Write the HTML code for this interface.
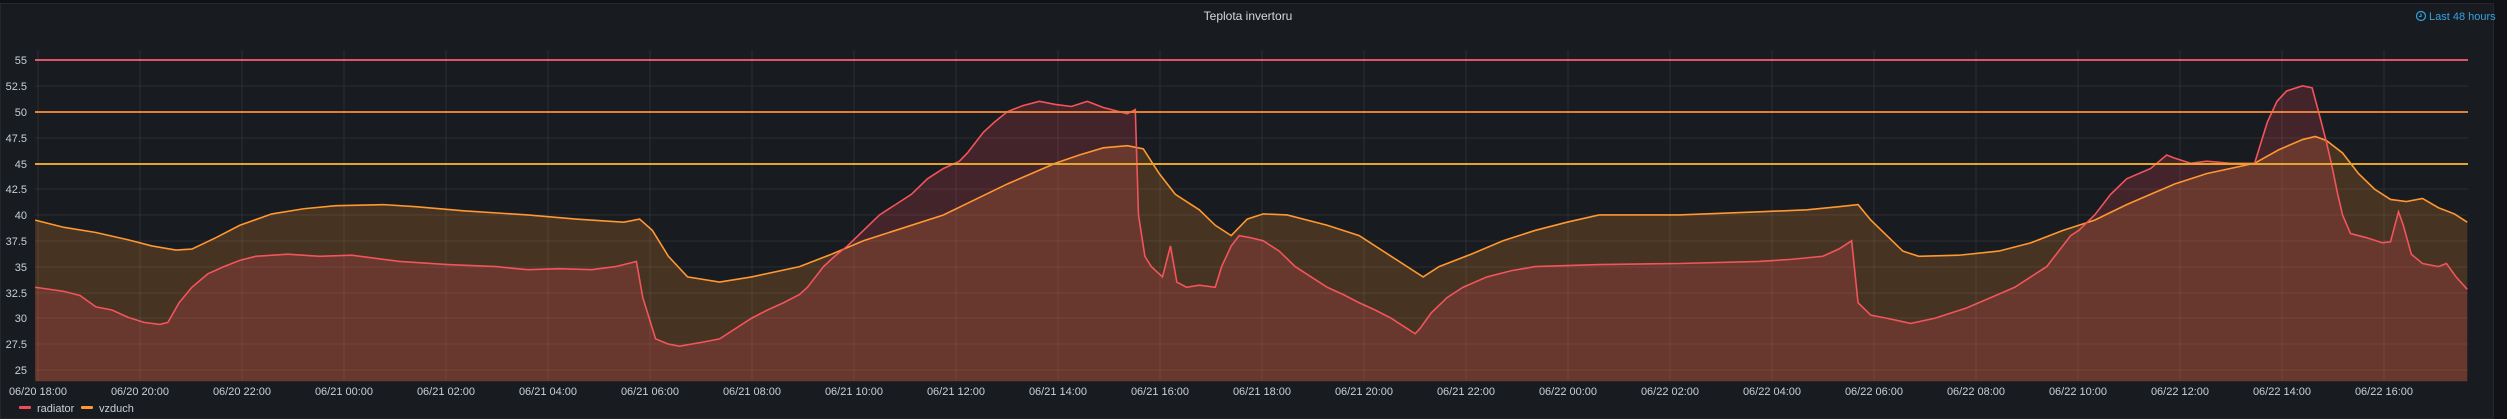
<!DOCTYPE html>
<html><head><meta charset="utf-8"><style>
html,body{margin:0;padding:0;background:#111217;width:2507px;height:419px;overflow:hidden;font-family:"Liberation Sans",sans-serif}
.panel{position:absolute;left:0;top:3px;width:2494px;height:416px;background:#181b1f;border:1px solid #25272c;box-sizing:border-box}
</style></head><body>
<div class="panel"></div>
<svg width="2507" height="419" style="position:absolute;left:0;top:0" font-family="Liberation Sans, sans-serif">
<text x="1248" y="20" fill="#d8d9da" font-size="12" text-anchor="middle">Teplota invertoru</text>
<circle cx="2421" cy="16" r="4.5" fill="none" stroke="#33a2e5" stroke-width="1.2"/>
<path d="M2421 13.5V16.5H2419" fill="none" stroke="#33a2e5" stroke-width="1.1"/>
<text x="2429" y="20" fill="#33a2e5" font-size="11">Last 48 hours</text>
<g stroke="#2b2d32" stroke-width="1">
<line x1="35" y1="86" x2="2468" y2="86"/><line x1="35" y1="138" x2="2468" y2="138"/>
<line x1="35" y1="189" x2="2468" y2="189"/><line x1="35" y1="215" x2="2468" y2="215"/>
<line x1="35" y1="241" x2="2468" y2="241"/><line x1="35" y1="267" x2="2468" y2="267"/>
<line x1="35" y1="293" x2="2468" y2="293"/><line x1="35" y1="318" x2="2468" y2="318"/>
<line x1="35" y1="344" x2="2468" y2="344"/><line x1="35" y1="370" x2="2468" y2="370"/>
</g>
<g transform="matrix(1.599 0 0 -10.33 0 628.15)">
<path fill="rgba(255,152,48,0.2)" d="M22 39.5 L40 38.8 60 38.3 80 37.6 95 37 110 36.6 120 36.7 135 37.8 150 39 170 40.1 190 40.6 210 40.9 240 41 260 40.8 290 40.4 330 40 360 39.6 390 39.3 400 39.6 408 38.5 418 36 430 34 450 33.5 470 34 500 35 520 36.2 540 37.5 560 38.5 590 40 610 41.5 630 43 645 44 660 45 675 45.8 690 46.5 705 46.7 715 46.4 725 44 735 42 750 40.5 760 39 770 38 780 39.6 790 40.1 805 40 830 39 850 38 870 36 890 34 900 35 920 36.2 940 37.5 960 38.5 980 39.3 1000 40 1050 40 1100 40.3 1130 40.5 1150 40.8 1162 41 1170 39.5 1180 38 1190 36.5 1200 36 1225 36.1 1250 36.5 1270 37.3 1290 38.5 1310 39.5 1330 41 1345 42 1360 43 1380 44 1410 45 1425 46.3 1440 47.3 1448 47.6 1455 47.2 1465 46 1475 44 1485 42.5 1495 41.5 1505 41.3 1515 41.6 1525 40.7 1535 40.1 1543 39.3 L1543 23.9 L22 23.9Z"/>
<path fill="rgba(242,73,92,0.2)" d="M22 33 L40 32.6 50 32.2 60 31.1 70 30.8 80 30.1 90 29.6 100 29.4 105 29.6 112 31.5 120 33 130 34.3 140 35 150 35.6 160 36 180 36.2 200 36 220 36.1 250 35.5 280 35.2 310 35 330 34.7 350 34.8 370 34.7 385 35 398 35.5 402 32 410 28 418 27.5 425 27.3 440 27.7 450 28 460 29 470 30 480 30.8 490 31.5 500 32.3 505 33 510 34 515 35 522 36 530 37 540 38.5 550 40 560 41 570 42 580 43.5 590 44.5 600 45.2 605 46 610 47 615 48 622 49 630 50 640 50.6 650 51 660 50.7 670 50.5 680 51 690 50.4 700 50 705 49.8 710 50.2 712 40 716 36 720 35 727 34 732 37 736 33.5 742 33 750 33.2 760 33 764 35 770 37 775 38 782 37.8 790 37.5 800 36.5 810 35 820 34 830 33 840 32.3 850 31.5 860 30.8 870 30 880 29 885 28.5 888 29 895 30.5 905 32 915 33 930 34 945 34.6 960 35 980 35.1 1000 35.2 1050 35.3 1100 35.5 1120 35.7 1140 36 1150 36.7 1158 37.5 1162 31.5 1170 30.3 1180 30 1195 29.5 1210 30 1230 31 1245 32 1260 33 1270 34 1280 35 1290 37 1295 38 1300 38.5 1310 40 1320 42 1330 43.5 1345 44.5 1355 45.8 1360 45.5 1370 45 1380 45.2 1395 45 1410 45 1414 47 1418 49 1424 51 1430 52 1440 52.5 1446 52.3 1450 50 1455 47 1458 45 1462 42 1465 40 1470 38.2 1480 37.8 1490 37.3 1495 37.4 1500 40.3 1503 39 1508 36.2 1515 35.3 1525 35 1530 35.3 1536 34 1543 32.8 L1543 23.9 L22 23.9Z"/>
<path fill="none" stroke="#ff9830" stroke-width="1.6" vector-effect="non-scaling-stroke" d="M22 39.5 L40 38.8 60 38.3 80 37.6 95 37 110 36.6 120 36.7 135 37.8 150 39 170 40.1 190 40.6 210 40.9 240 41 260 40.8 290 40.4 330 40 360 39.6 390 39.3 400 39.6 408 38.5 418 36 430 34 450 33.5 470 34 500 35 520 36.2 540 37.5 560 38.5 590 40 610 41.5 630 43 645 44 660 45 675 45.8 690 46.5 705 46.7 715 46.4 725 44 735 42 750 40.5 760 39 770 38 780 39.6 790 40.1 805 40 830 39 850 38 870 36 890 34 900 35 920 36.2 940 37.5 960 38.5 980 39.3 1000 40 1050 40 1100 40.3 1130 40.5 1150 40.8 1162 41 1170 39.5 1180 38 1190 36.5 1200 36 1225 36.1 1250 36.5 1270 37.3 1290 38.5 1310 39.5 1330 41 1345 42 1360 43 1380 44 1410 45 1425 46.3 1440 47.3 1448 47.6 1455 47.2 1465 46 1475 44 1485 42.5 1495 41.5 1505 41.3 1515 41.6 1525 40.7 1535 40.1 1543 39.3"/>
<path fill="none" stroke="#f2545c" stroke-width="1.6" vector-effect="non-scaling-stroke" d="M22 33 L40 32.6 50 32.2 60 31.1 70 30.8 80 30.1 90 29.6 100 29.4 105 29.6 112 31.5 120 33 130 34.3 140 35 150 35.6 160 36 180 36.2 200 36 220 36.1 250 35.5 280 35.2 310 35 330 34.7 350 34.8 370 34.7 385 35 398 35.5 402 32 410 28 418 27.5 425 27.3 440 27.7 450 28 460 29 470 30 480 30.8 490 31.5 500 32.3 505 33 510 34 515 35 522 36 530 37 540 38.5 550 40 560 41 570 42 580 43.5 590 44.5 600 45.2 605 46 610 47 615 48 622 49 630 50 640 50.6 650 51 660 50.7 670 50.5 680 51 690 50.4 700 50 705 49.8 710 50.2 712 40 716 36 720 35 727 34 732 37 736 33.5 742 33 750 33.2 760 33 764 35 770 37 775 38 782 37.8 790 37.5 800 36.5 810 35 820 34 830 33 840 32.3 850 31.5 860 30.8 870 30 880 29 885 28.5 888 29 895 30.5 905 32 915 33 930 34 945 34.6 960 35 980 35.1 1000 35.2 1050 35.3 1100 35.5 1120 35.7 1140 36 1150 36.7 1158 37.5 1162 31.5 1170 30.3 1180 30 1195 29.5 1210 30 1230 31 1245 32 1260 33 1270 34 1280 35 1290 37 1295 38 1300 38.5 1310 40 1320 42 1330 43.5 1345 44.5 1355 45.8 1360 45.5 1370 45 1380 45.2 1395 45 1410 45 1414 47 1418 49 1424 51 1430 52 1440 52.5 1446 52.3 1450 50 1455 47 1458 45 1462 42 1465 40 1470 38.2 1480 37.8 1490 37.3 1495 37.4 1500 40.3 1503 39 1508 36.2 1515 35.3 1525 35 1530 35.3 1536 34 1543 32.8"/>
</g>
<line x1="35" y1="60" x2="2468" y2="60" stroke="#e0546a" stroke-width="2"/>
<line x1="35" y1="112" x2="2468" y2="112" stroke="#e57d3a" stroke-width="2"/>
<line x1="35" y1="164" x2="2468" y2="164" stroke="#e5a32a" stroke-width="2"/>
<g fill="#c7d0d9" font-size="11" text-anchor="end">
<text x="27" y="64">55</text><text x="27" y="90">52.5</text><text x="27" y="116">50</text><text x="27" y="142">47.5</text>
<text x="27" y="168">45</text><text x="27" y="193">42.5</text><text x="27" y="219">40</text><text x="27" y="245">37.5</text>
<text x="27" y="271">35</text><text x="27" y="297">32.5</text><text x="27" y="322">30</text><text x="27" y="348">27.5</text><text x="27" y="374">25</text>
</g>
<g fill="#c7d0d9" font-size="11" text-anchor="middle">
<text x="38" y="395">06/20 18:00</text><text x="140" y="395">06/20 20:00</text><text x="242" y="395">06/20 22:00</text>
<text x="344" y="395">06/21 00:00</text><text x="446" y="395">06/21 02:00</text><text x="548" y="395">06/21 04:00</text>
<text x="650" y="395">06/21 06:00</text><text x="752" y="395">06/21 08:00</text><text x="854" y="395">06/21 10:00</text>
<text x="956" y="395">06/21 12:00</text><text x="1058" y="395">06/21 14:00</text><text x="1160" y="395">06/21 16:00</text>
<text x="1262" y="395">06/21 18:00</text><text x="1364" y="395">06/21 20:00</text><text x="1466" y="395">06/21 22:00</text>
<text x="1568" y="395">06/22 00:00</text><text x="1670" y="395">06/22 02:00</text><text x="1772" y="395">06/22 04:00</text>
<text x="1874" y="395">06/22 06:00</text><text x="1976" y="395">06/22 08:00</text><text x="2078" y="395">06/22 10:00</text>
<text x="2180" y="395">06/22 12:00</text><text x="2282" y="395">06/22 14:00</text><text x="2384" y="395">06/22 16:00</text>
</g>
<g stroke="rgba(255,255,255,0.08)">
<line x1="38" y1="50" x2="38" y2="381"/><line x1="140" y1="50" x2="140" y2="381"/><line x1="242" y1="50" x2="242" y2="381"/><line x1="344" y1="50" x2="344" y2="381"/><line x1="446" y1="50" x2="446" y2="381"/><line x1="548" y1="50" x2="548" y2="381"/><line x1="650" y1="50" x2="650" y2="381"/><line x1="752" y1="50" x2="752" y2="381"/><line x1="854" y1="50" x2="854" y2="381"/><line x1="956" y1="50" x2="956" y2="381"/><line x1="1058" y1="50" x2="1058" y2="381"/><line x1="1160" y1="50" x2="1160" y2="381"/><line x1="1262" y1="50" x2="1262" y2="381"/><line x1="1364" y1="50" x2="1364" y2="381"/><line x1="1466" y1="50" x2="1466" y2="381"/><line x1="1568" y1="50" x2="1568" y2="381"/><line x1="1670" y1="50" x2="1670" y2="381"/><line x1="1772" y1="50" x2="1772" y2="381"/><line x1="1874" y1="50" x2="1874" y2="381"/><line x1="1976" y1="50" x2="1976" y2="381"/><line x1="2078" y1="50" x2="2078" y2="381"/><line x1="2180" y1="50" x2="2180" y2="381"/><line x1="2282" y1="50" x2="2282" y2="381"/><line x1="2384" y1="50" x2="2384" y2="381"/>
</g>
<rect x="19" y="406" width="12" height="3" rx="1" fill="#f2495c"/>
<text x="37" y="412" fill="#c7d0d9" font-size="11">radiator</text>
<rect x="81" y="406" width="12" height="3" rx="1" fill="#ff9830"/>
<text x="99" y="412" fill="#c7d0d9" font-size="11">vzduch</text>
</svg>
</body></html>
